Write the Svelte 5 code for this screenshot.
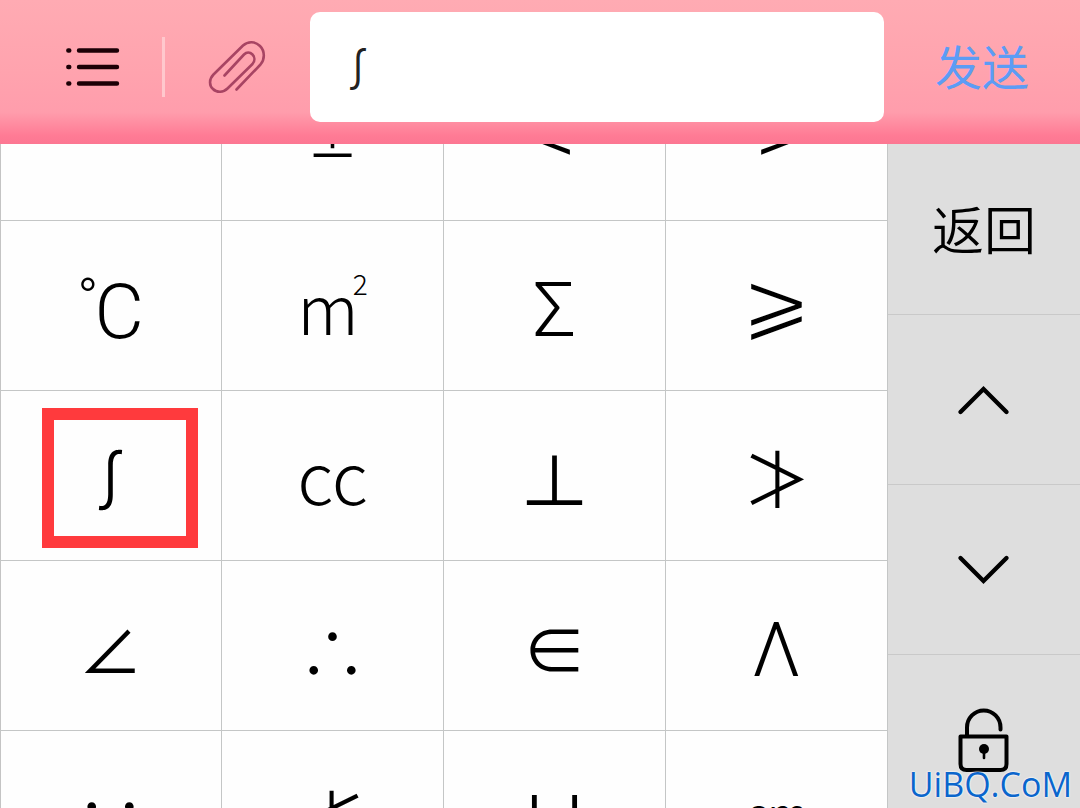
<script>
  // symbols of the keyboard page, row by row
  const symbols = [
    { label: '' },
    { label: '±', kind: 'small' },
    { label: '<' },
    { label: '>' },
    { label: 'C', degree: '°', kind: 'celsius' },
    { label: 'm', sup: '2', kind: 'power' },
    { label: 'Σ', kind: 'letter' },
    { label: '⩾', kind: 'relation' },
    { label: '∫', kind: 'integral' },
    { label: 'cc', kind: 'unit' },
    { label: '⊥', kind: 'large' },
    { label: '≯', kind: 'crossed' },
    { label: '∠' },
    { label: '∴', kind: 'dots' },
    { label: '∈' },
    { label: 'Λ', kind: 'letter' },
    { label: '∵', kind: 'dots' },
    { label: '≮', kind: 'crossed' },
    { label: '∪', kind: 'large' },
    { label: 'cm', kind: 'length' },
  ];

  let message = $state('∫');
  let selected = $state('∫');

  function pick(symbol) {
    selected = symbol.label;
    message += (symbol.degree ?? '') + symbol.label + (symbol.sup ?? '');
  }
</script>

<div class="keyboard">
  <header class="toolbar">
    <button class="toolbar__button" type="button" aria-label="菜单">
      <svg width="56" height="44" viewBox="0 0 56 44" stroke="#1c0006" stroke-width="4.400" stroke-linecap="round">
        <path d="M15 5.500h38M15 22h38M15 38.500h38" />
        <path d="M4.300 5.500h1M4.300 22h1M4.300 38.500h1" />
      </svg>
    </button>
    <span class="toolbar__divider"></span>
    <button class="toolbar__button" type="button" aria-label="附件">
      <svg width="60" height="56" viewBox="0 0 60 56" fill="none" stroke="#a84463" stroke-width="2.600" stroke-linecap="round" stroke-linejoin="round">
        <path d="M29.500 50.500L53.500 25.500C58 20.500 58 12 53 7C48 2 41 2 36 6.500L6.500 35.500C2 40 2 46.500 6 50C10 54 16.500 53.500 20.500 49.500L45.500 25C48 22 48 18 45.500 15.500C43 13 39.500 13 37 15.500L17.500 36.500" />
      </svg>
    </button>
    <input class="toolbar__input" type="text" aria-label="消息" bind:value={message} />
    <button class="toolbar__send" type="button" onclick={() => (message = '')}>发送</button>
  </header>

  <main class="panel">
    <div class="symbols">
      <div class="symbols__grid">
        {#each symbols as symbol}
          <button
            class="key {symbol.kind ?? ''}"
            class:selected={symbol.label && symbol.label === selected}
            type="button"
            onclick={() => pick(symbol)}
          >
            <span>{#if symbol.degree}<small>{symbol.degree}</small>{/if}{symbol.label}{#if symbol.sup}<sup>{symbol.sup}</sup>{/if}</span>
          </button>
        {/each}
      </div>
    </div>

    <nav class="side">
      <button class="side__button side__back" type="button">返回</button>
      <button class="side__button" type="button" aria-label="上一页">
        <svg width="56" height="32" viewBox="0 0 56 32" fill="none" stroke="#000" stroke-width="4.400" stroke-linecap="round">
          <path d="M4.500 28L27.500 5L50.500 28" />
        </svg>
      </button>
      <button class="side__button" type="button" aria-label="下一页">
        <svg width="56" height="32" viewBox="0 0 56 32" fill="none" stroke="#000" stroke-width="4.400" stroke-linecap="round">
          <path d="M4.500 4L27.500 27L50.500 4" />
        </svg>
      </button>
      <button class="side__button" type="button" aria-label="锁定">
        <svg width="52" height="66" viewBox="0 0 52 66" fill="none" stroke="#000" stroke-width="4" stroke-linecap="round">
          <path d="M9 29V20.500A16.700 17 0 0 1 42.500 20.500V22.500" />
          <path d="M2.500 29.500H48.500V57Q48.500 63 42.500 63H8.500Q2.500 63 2.500 57Z" stroke-linejoin="round" />
          <circle cx="26" cy="42" r="5" fill="#000" stroke="none" />
          <path d="M26 43V51" stroke-width="2.600" />
        </svg>
      </button>
    </nav>
  </main>

  <span class="watermark">UiBQ.CoM</span>
</div>

<style>
  :global(body) {
    margin: 0;
  }

  .keyboard {
    display: flex;
    flex-direction: column;
    font-family: "Noto Sans CJK SC", sans-serif;
    height: 100vh;
    overflow: hidden;
    position: relative;
  }

  button {
    background: none;
    border: 0;
    color: #000;
    font-family: inherit;
    margin: 0;
    padding: 0;
  }

  svg {
    display: block;
  }

  .toolbar {
    align-items: center;
    background: linear-gradient(#ffabb3 0%, #ffa3ae 50%, #ff9dac 78%, #ff7b95 94%, #fc7792 100%);
    box-sizing: border-box;
    display: flex;
    flex: none;
    height: 144px;
    padding: 0 0 10px 64px;
  }

  .toolbar__divider {
    background: #ffc8cd;
    height: 60px;
    margin: 0 42px;
    width: 3px;
  }

  .toolbar__input {
    background: #fff;
    border: 0;
    border-radius: 10px;
    box-sizing: border-box;
    color: #222;
    flex: 1;
    font-family: "Noto Sans CJK SC", sans-serif;
    font-size: 44px;
    font-weight: 350;
    height: 110px;
    margin-left: 43px;
    min-width: 0;
    padding: 0 26px;
  }

  .toolbar__send {
    color: #5c9cf5;
    font-size: 47px;
    font-weight: 400;
    padding-bottom: 6px;
    width: 196px;
  }

  .panel {
    display: flex;
    flex: 1;
    min-height: 0;
  }

  .symbols {
    background: #fefefe;
    box-shadow: inset 1px 0 #c4c4c4;
    display: flex;
    flex: 1;
    flex-direction: column;
    overflow: hidden;
  }

  /* scrolled part of the way through the first row */
  .symbols__grid {
    display: grid;
    grid-auto-rows: 170px;
    grid-template-columns: repeat(4, 1fr);
    margin-top: -93px;
  }

  .key {
    border-bottom: 1px solid #c4c6c6;
    border-right: 1px solid #c4c6c6;
    font-size: 64px;
    font-weight: 400;
    line-height: 72px;
    position: relative;
  }

  .small {
    font-size: 52px;
  }

  .unit {
    font-size: 72px;
    font-weight: 300;
    padding-bottom: 4px;
  }

  .length {
    font-size: 44px;
    font-weight: 350;
    padding-bottom: 8px;
  }

  .letter,
  .celsius {
    font-family: Roboto, sans-serif;
    font-size: 76px;
    font-weight: 300;
    padding-top: 8px;
  }

  .celsius small {
    font-size: 56px;
    line-height: 56px;
    margin-right: -4px;
    vertical-align: 20px;
  }

  /* the outline in the key colour thins the heavy glyph */
  .relation {
    -webkit-text-stroke: 2px #fefefe;
    font-family: "DejaVu Sans", sans-serif;
    font-size: 84px;
    padding-bottom: 8px;
  }

  .large {
    font-size: 70px;
    padding-top: 4px;
  }

  .crossed {
    font-size: 68px;
    font-weight: 350;
  }

  .integral {
    font-weight: 350;
  }

  .dots {
    font-size: 68px;
    font-weight: 300;
    padding-top: 8px;
  }

  .power {
    font-size: 68px;
    font-weight: 300;
  }

  .power sup {
    font-size: 28px;
    line-height: 28px;
    margin-left: -6px;
    vertical-align: 40px;
  }

  .selected::after {
    border: 12px solid #ff3a3d;
    content: '';
    inset: 17px 23px 12px 42px;
    position: absolute;
  }

  .side {
    background: #dedede;
    display: flex;
    flex-direction: column;
    flex: none;
    width: 192px;
  }

  .side__button {
    align-items: center;
    border-top: 1px solid #c9c9c9;
    box-sizing: border-box;
    display: flex;
    flex: none;
    height: 170px;
    justify-content: center;
  }

  .side__back {
    border-top-color: transparent;
    font-size: 52px;
    font-weight: 350;
    line-height: 72px;
    padding-bottom: 4px;
  }

  .watermark {
    bottom: 4px;
    color: #0b66cc;
    font-family: "Open Sans", sans-serif;
    font-size: 34px;
    line-height: 40px;
    position: absolute;
    right: 8px;
    text-shadow: 0 0 2px #fff, 0 0 2px #fff;
  }
</style>
